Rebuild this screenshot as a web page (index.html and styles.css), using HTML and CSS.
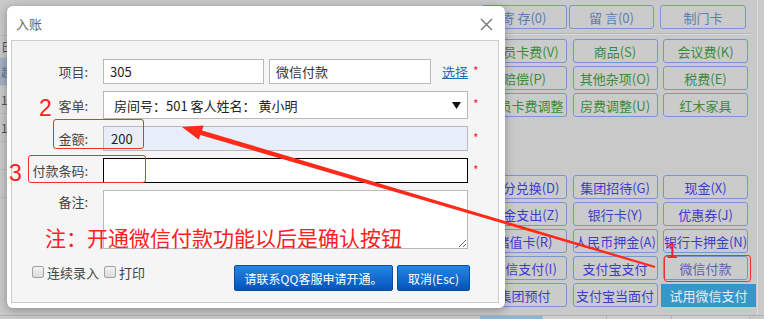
FILE: index.html
```html
<!DOCTYPE html>
<html lang="zh">
<head>
<meta charset="utf-8">
<title>入账</title>
<link rel="stylesheet" href="styles.css">
</head>
<body>
<div class="screen">
  <div class="app">
    <div class="side">
      <div class="side-top"></div>
      <div class="side-row side-head">日</div>
      <div class="side-row side-sel">赵</div>
      <div class="side-row">1</div>
      <div class="side-row">1</div>
      <div class="side-row"></div>
      <div class="side-row"></div>
    </div>
    <div class="spacer"></div>
    <div class="panel-right">
      <div class="top-row">
        <div class="btn t-top">寄 存(0)</div>
        <div class="btn t-top">留 言(0)</div>
        <div class="btn t-top">制门卡</div>
      </div>
      <div class="sep"></div>
      <div class="grid">
        <div class="btn g">会员卡费(V)</div>
        <div class="btn g">商品(S)</div>
        <div class="btn g">会议费(K)</div>
        <div class="btn g">赔偿(P)</div>
        <div class="btn g">其他杂项(O)</div>
        <div class="btn g">税费(E)</div>
        <div class="btn g">会员卡费调整</div>
        <div class="btn g">房费调整(U)</div>
        <div class="btn g">红木家具</div>
      </div>
      <div class="grid grid-pay">
        <div class="btn b">积分兑换(D)</div>
        <div class="btn b">集团招待(G)</div>
        <div class="btn b">现金(X)</div>
        <div class="btn b">押金支出(Z)</div>
        <div class="btn b">银行卡(Y)</div>
        <div class="btn b">优惠券(J)</div>
        <div class="btn b">储值卡(R)</div>
        <div class="btn b">人民币押金(A)</div>
        <div class="btn b">银行卡押金(N)</div>
        <div class="btn b">微信支付(I)</div>
        <div class="btn b">支付宝支付</div>
        <div class="btn b muted">微信付款</div>
        <div class="btn b">集团预付</div>
        <div class="btn b">支付宝当面付</div>
        <div class="btn trial">试用微信支付</div>
      </div>
    </div>
  </div>
  <div class="tabs">
    <div class="tab tab-on"></div>
    <div class="tab tab-2"></div>
    <div class="tab tab-3"></div>
    <div class="tab tab-4"></div>
  </div>

  <div class="dialog">
    <div class="dlg-title">
      <span class="dlg-name">入账</span>
      <svg class="close" width="13" height="13" viewBox="0 0 13 13"><path d="M1 1 L12 12 M12 1 L1 12" stroke="#777" stroke-width="1.4" fill="none"/></svg>
    </div>
    <div class="dlg-body">
      <div class="form">
        <div class="row">
          <span class="lbl">项目:</span>
          <div class="field w-half">305</div>
          <div class="field w-half2">微信付款</div>
          <a class="pick">选择</a>
          <span class="req">*</span>
        </div>
        <div class="row">
          <span class="lbl">客单:</span>
          <div class="field select">房间号：501 客人姓名： 黄小明<svg class="caret" width="9" height="7" viewBox="0 0 9 7"><path d="M0 0 H9 L4.5 7 Z" fill="#111"/></svg></div>
          <span class="req">*</span>
        </div>
        <div class="row">
          <span class="lbl">金额:</span>
          <div class="field amount">200</div>
          <span class="req">*</span>
        </div>
        <div class="row">
          <span class="lbl">付款条码:</span>
          <div class="field code"></div>
          <span class="req">*</span>
        </div>
        <div class="row row-top">
          <span class="lbl lbl-top">备注:</span>
          <textarea class="field memo"></textarea>
        </div>
      </div>
      <div class="footer">
        <div class="checks">
          <span class="cb"></span><span class="cb-text">连续录入</span>
          <span class="cb"></span><span class="cb-text">打印</span>
        </div>
        <div class="actions">
          <div class="pbtn pbtn-wide">请联系QQ客服申请开通。</div>
          <div class="pbtn pbtn-cancel">取消(Esc)</div>
        </div>
      </div>
    </div>
  </div>

  <svg class="annot" width="764" height="319" viewBox="0 0 764 319">
    <polygon points="182,127 203.6,125.6 202.1,130.5 655.3,266.0 654.7,268.0 200.3,134.9 198.8,139.8" fill="#ff2a1a"/>
  </svg>
  <div class="mark mark-a"></div>
  <div class="mark mark-b"></div>
  <div class="mark mark-c"></div>
  <span class="num num-1">1</span>
  <span class="num num-2">2</span>
  <span class="num num-3">3</span>
  <div class="note">注：开通微信付款功能以后是确认按钮</div>
</div>
</body>
</html>
```

FILE: styles.css
```css
* { box-sizing: border-box; }
html, body { margin: 0; padding: 0; }
body {
  width: 764px;
  height: 319px;
  overflow: hidden;
  background: #c9c9c9;
  font-family: "Noto Sans CJK SC", "Microsoft YaHei", sans-serif;
  font-size: 13px;
  color: #222;
}
.screen { position: relative; width: 764px; height: 319px; overflow: hidden; }

/* background application */
.app { display: flex; height: 315px; }
.side { width: 8px; overflow: hidden; display: flex; flex-direction: column; }
.side-top { height: 36px; border-bottom: 1px solid #bdbdbd; }
.side-row {
  height: 28px;
  border-bottom: 1px solid #bdbdbd;
  font-size: 12px;
  line-height: 27px;
  color: #555;
  padding-left: 1px;
  white-space: nowrap;
}
.side-head { height: 22px; line-height: 22px; }
.side-sel { background: #a3b2c4; color: #6a7a8c; }
.spacer { flex: 1; }
.panel-right {
  width: 280px;
  margin-right: 6px;
  padding: 5px 0 0 3px;
  border-right: 1px solid #dcdcdc;
}
.top-row { display: flex; height: 24px; }
.top-row .btn:nth-child(1) { width: 86px; }
.top-row .btn:nth-child(2) { width: 85px; margin-left: 2px; }
.top-row .btn:nth-child(3) { width: 86px; margin-left: 6px; }
.sep {
  margin-top: 4px;
  height: 2px;
  border-top: 1px solid #b6b6b6;
  border-bottom: 1px solid #dadada;
  margin-right: 6px;
}
.grid {
  display: grid;
  grid-template-columns: 85px 85px 85px;
  grid-auto-rows: 24px;
  column-gap: 5.5px;
  row-gap: 3px;
  margin: 4px 0 0 1px;
}
.grid-pay { margin-top: 58px; }
.btn {
  height: 24px;
  border: 1px solid #7596cf;
  border-radius: 3px;
  background: #cbcbcb;
  display: flex;
  align-items: center;
  justify-content: center;
  white-space: nowrap;
  overflow: hidden;
  font-size: 13px;
}
.t-top { color: #5b7db1; }
.g { color: #3b8a3b; }
.b { color: #3d3dcc; }
.muted { color: #5e5eae; }
.trial {
  background: #3598c9;
  border-color: #3598c9;
  border-radius: 0;
  color: #e3eef6;
  width: 95px;
  margin-left: -2px;
  height: 23px;
  margin-top: 1px;
}
.tabs {
  display: flex;
  height: 4px;
  padding-left: 480px;
  border-top: 1px solid #b0b0b0;
}
.tab { border-right: 1px solid #b4b4b4; background: #cfcfcf; }
.tab-on { width: 63px; background: #8db4d2; }
.tab-2 { width: 64px; }
.tab-3 { width: 65px; }
.tab-4 { width: 78px; }

/* dialog */
.dialog {
  position: absolute;
  left: 7px;
  top: 6px;
  width: 498px;
  height: 302px;
  background: #fff;
  border-radius: 6px;
  box-shadow: 0 2px 10px rgba(0, 0, 0, 0.32);
  display: flex;
  flex-direction: column;
}
.dlg-title {
  height: 34px;
  display: flex;
  align-items: center;
  justify-content: space-between;
  padding: 0 12px 0 9px;
}
.dlg-name { font-size: 13px; color: #666; margin-top: 1px; }
.close { margin-top: 2px; }
.dlg-body {
  flex: 1;
  margin: 0 6px 5px 4px;
  border: 1px solid #cbcbcb;
  background: #f5f5f5;
  display: flex;
  flex-direction: column;
}
.form { display: flex; flex-direction: column; gap: 7px; padding-top: 18px; }
.row { display: flex; align-items: center; height: 25px; }
.row-top { align-items: flex-start; height: 59px; }
.lbl {
  width: 79px;
  padding-right: 3px;
  text-align: right;
  color: #444;
  margin-right: 12px;
  white-space: nowrap;
}
.lbl-top { margin-top: 2px; }
.field {
  height: 25px;
  border: 1px solid #b9b9b9;
  background: #fff;
  display: flex;
  align-items: center;
  padding-left: 6px;
  font-size: 13px;
  color: #222;
}
.w-half { width: 161px; }
.w-half2 { width: 162px; margin-left: 5px; color: #333; }
.pick {
  margin-left: 11px;
  color: #1e6db3;
  text-decoration: underline;
  cursor: pointer;
}
.req { color: #f23; margin-left: 5px; font-size: 12px; margin-top: -3px; }
.select {
  width: 365px;
  height: 28px;
  padding-left: 10px;
  justify-content: space-between;
  padding-right: 6px;
}
.row:nth-child(2) { height: 28px; }
.caret { margin-top: 1px; }
.amount { width: 365px; background: #e8eef9; padding-left: 7px; }
.code { width: 365px; border-color: #000; }
.memo {
  width: 365px;
  height: 59px;
  margin: 0;
  padding: 4px 6px;
  resize: both;
  font-family: inherit;
  display: block;
}
.footer {
  display: flex;
  justify-content: space-between;
  margin-top: 16px;
  padding: 0 28px 0 20px;
}
.checks { display: flex; align-items: center; height: 12px; margin-top: 1px; }
.cb {
  width: 12px;
  height: 12px;
  border: 1px solid #a2a2a2;
  border-radius: 2px;
  background: linear-gradient(#f2f2f2, #dcdcdc);
}
.cb-text { color: #444; font-size: 13px; margin: 0 5px 0 3px; }
.actions { display: flex; gap: 4px; }
.pbtn {
  height: 26px;
  border: 1px solid #0c4c9e;
  border-radius: 2px;
  background: linear-gradient(#2586e4, #0553b9);
  color: #fff;
  font-size: 12px;
  display: flex;
  align-items: center;
  justify-content: center;
}
.pbtn-wide { width: 159px; }
.pbtn-cancel { width: 73px; }

/* annotations drawn on top of the screenshot */
.annot { position: absolute; left: 0; top: 0; pointer-events: none; }
.mark { position: absolute; border: 1px solid #ee3030; border-radius: 3px; }
.mark-a { left: 53px; top: 119px; width: 91px; height: 30px; }
.mark-b { left: 28px; top: 155px; width: 118px; height: 28px; }
.mark-c { left: 664px; top: 255px; width: 87px; height: 27px; border-width: 1.5px; }
.num {
  position: absolute;
  font-family: "Liberation Sans", Arial, sans-serif;
  color: #ff2020;
  font-size: 23px;
  line-height: 23px;
}
.num-1 { left: 666px; top: 240px; font-size: 22px; line-height: 22px; font-weight: 300; }
.num-2 { left: 39px; top: 97px; }
.num-3 { left: 9px; top: 162px; }
.note {
  position: absolute;
  left: 45px;
  top: 227px;
  font-size: 21px;
  line-height: 21px;
  color: #ff2020;
  white-space: nowrap;
}
```
